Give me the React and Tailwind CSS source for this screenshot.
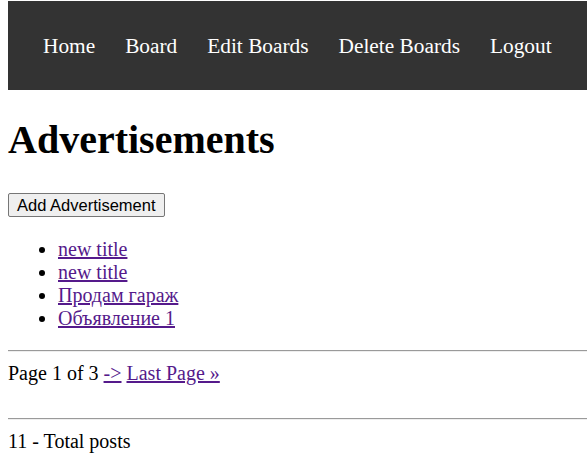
import React from 'react';

const navLinks = ['Home', 'Board', 'Edit Boards', 'Delete Boards', 'Logout'];
const posts = ['new title', 'new title', 'Продам гараж', 'Объявление 1'];

const linkClass = 'text-[#551a8b] underline';

const App = () => {
  return (
    <div className="pl-2 pt-px text-[20px] text-black bg-white font-['Liberation_Serif','Times_New_Roman',serif] min-h-[468px] overflow-hidden">
      <nav className="h-[89px] bg-[#333333] flex items-center pl-5 pt-[2px]">
        {navLinks.map((label) => (
          <a key={label} href="#" className="px-[15px] text-white text-[21.33px] leading-[25px] whitespace-nowrap">
            {label}
          </a>
        ))}
      </nav>

      <h1 className="text-[40px] font-bold leading-[46px] mt-[27px] mb-[27px]">Advertisements</h1>

      <div className="flex pt-[3px]">
        <button className="h-[24px] font-['Liberation_Sans',Arial,sans-serif] text-[16.5px] leading-[19px] px-[8px] bg-[#efefef] border border-[#767676] rounded-[2px] text-black">
          Add Advertisement
        </button>
      </div>

      <ul className="list-disc pl-[50px] mt-[21px] mb-5 leading-[23px]">
        {posts.map((title, i) => (
          <li key={i}>
            <a href="#" className={linkClass}>{title}</a>
          </li>
        ))}
      </ul>

      <hr className="border-0 border-t border-t-[#9a9a9a] border-b border-b-[#eeeeee] my-[10px]" />

      <div className="leading-[23px]">
        Page 1 of 3 <a href="#" className={linkClass}>-&gt;</a> <a href="#" className={linkClass}>Last Page »</a>
      </div>

      <hr className="border-0 border-t border-t-[#9a9a9a] border-b border-b-[#eeeeee] mt-[33px] mb-[10px]" />

      <div className="leading-[23px]">11 - Total posts</div>
    </div>
  );
};

export default App;
